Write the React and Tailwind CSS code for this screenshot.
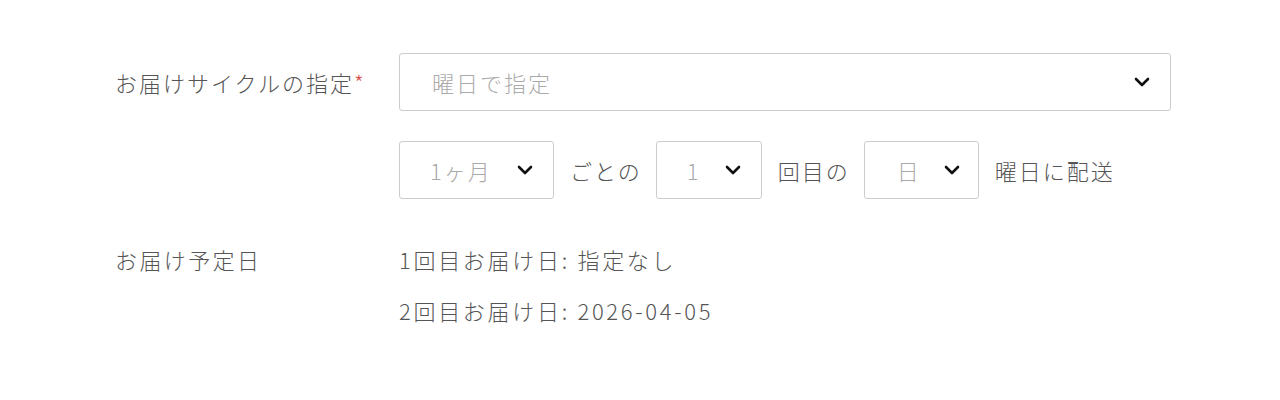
import React from 'react';

const Chevron = () => (
  <svg width="16" height="10" viewBox="0 0 16 10" className="shrink-0">
    <path d="M2 2l6 6 6-6" fill="none" stroke="#111" strokeWidth="2.6" strokeLinecap="round" strokeLinejoin="round" />
  </svg>
);

const SelectBox = ({ value, className = '' }) => (
  <div
    className={`h-[58px] flex items-center justify-between border border-[#cccccc] rounded-[3px] bg-white ${className}`}
  >
    <span className="text-[#aaaaaa]">{value}</span>
    <Chevron />
  </div>
);

export default function App() {
  return (
    <div
      className="bg-white w-[1280px] h-[400px] pt-[53px] pl-[115px] text-[22px] font-light tracking-[2px] text-[#555555]"
      style={{ fontFamily: '"Noto Sans CJK JP", "Noto Sans", sans-serif' }}
    >
      <div className="flex items-center">
        <div className="w-[284px]">
          お届けサイクルの指定<span className="text-[#d9534f]">*</span>
        </div>
        <SelectBox value="曜日で指定" className="w-[772px] pl-[32px] pr-[20px]" />
      </div>

      <div className="flex items-center mt-[30px] ml-[284px] gap-[16px]">
        <SelectBox value="1ヶ月" className="w-[155px] pl-[30px] pr-[20px]" />
        <span className="-mr-[2px]">ごとの</span>
        <SelectBox value="1" className="w-[106px] pl-[30px] pr-[20px]" />
        <span className="-mr-[2px]">回目の</span>
        <SelectBox value="日" className="w-[115px] pl-[32px] pr-[18px]" />
        <span>曜日に配送</span>
      </div>

      <div className="flex mt-[44px]">
        <div className="w-[284px] tracking-[2.4px]">お届け予定日</div>
        <div className="flex flex-col gap-[18px] tracking-[2.7px]">
          <div>1回目お届け日: 指定なし</div>
          <div>2回目お届け日: 2026-04-05</div>
        </div>
      </div>
    </div>
  );
}
